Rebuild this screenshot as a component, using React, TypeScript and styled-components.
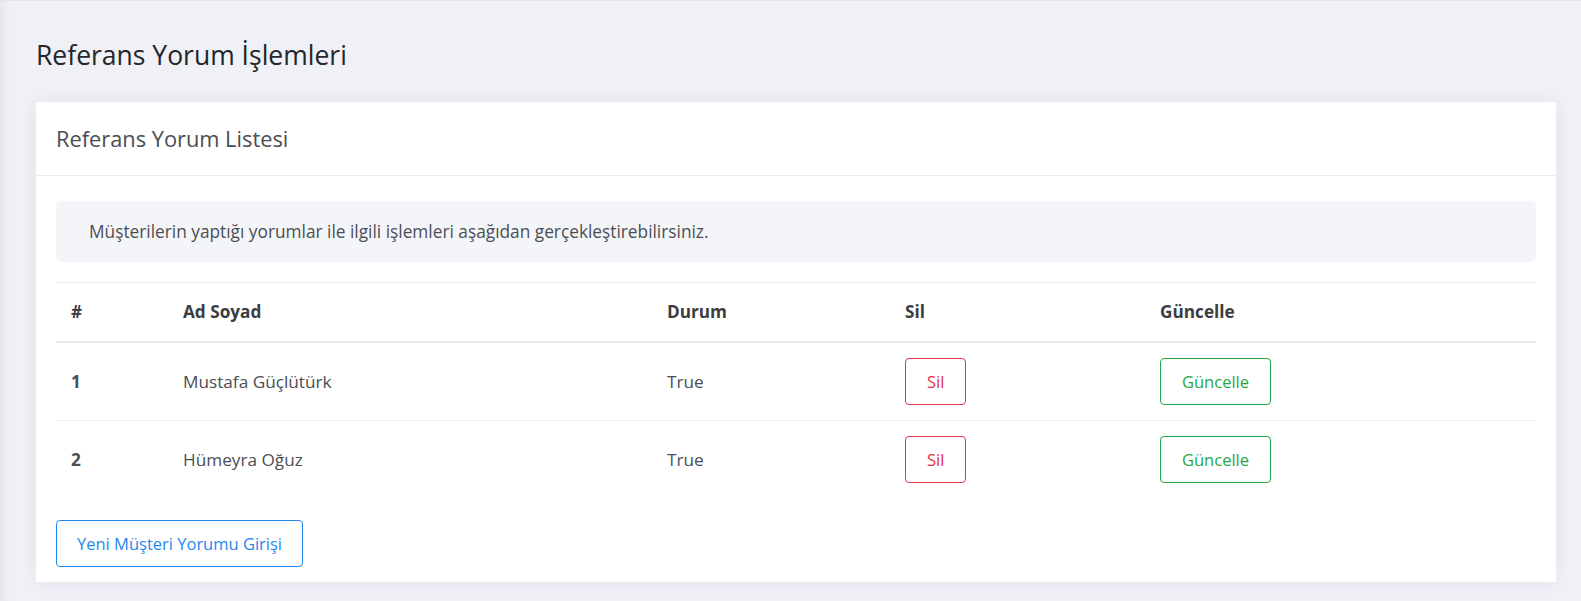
import React from "react";
import styled, { createGlobalStyle } from "styled-components";

const Global = createGlobalStyle`
  html, body { margin: 0; padding: 0; }
  body {
    background: #f0f1f7;
    font-family: "Open Sans", "Noto Sans", "Liberation Sans", sans-serif;
    color: #495057;
  }
  * { box-sizing: border-box; }
`;

const Page = styled.div`
  min-height: 601px;
  border-top: 1px solid #e3e4ea;
  padding: 38px 25px 20px 36px;
  box-shadow: inset 12px 0 12px -10px rgba(0, 0, 0, 0.07);
`;

const Title = styled.h1`
  margin: 0 0 31px;
  font-size: 26.5px;
  line-height: 32px;
  font-weight: 400;
  color: #23262b;
`;

const Card = styled.section`
  background: #fff;
  box-shadow: 0 0 18px rgba(40, 45, 80, 0.07);
`;

const CardHeader = styled.div`
  height: 74px;
  display: flex;
  align-items: center;
  padding: 0 20px;
  border-bottom: 1px solid #e9ebef;
  font-size: 21.8px;
  color: #4a4d52;
`;

const CardBody = styled.div`
  padding: 25px 20px 15px;
`;

const Alert = styled.div`
  height: 61px;
  display: flex;
  align-items: center;
  padding: 0 33px;
  background: #f4f5f9;
  border-radius: 5px;
  font-size: 17.3px;
  color: #4b4e54;
  margin-bottom: 20px;
`;

const Table = styled.table`
  width: 100%;
  border-collapse: collapse;
  table-layout: fixed;
  font-size: 17.2px;
`;

const Th = styled.th`
  text-align: left;
  padding: 17px 15px;
  line-height: 24px;
  font-weight: 700;
  color: #3c3d40;
  border-top: 1px solid #e9ebef;
  border-bottom: 2px solid #e9ebef;
`;

const Td = styled.td<{ $bold?: boolean }>`
  padding: 15px;
  line-height: 24px;
  height: 77px;
  vertical-align: middle;
  color: #4b4e54;
  font-weight: ${(p) => (p.$bold ? 700 : 400)};
  border-top: 1px solid #eceef2;
`;

const Row = styled.tr`
  &:first-child td { border-top: none; }
`;

const OutlineButton = styled.button<{ $color: string; $px: number }>`
  height: 47px;
  padding: 0 ${(p) => p.$px}px;
  background: transparent;
  border: 1px solid ${(p) => p.$color};
  color: ${(p) => p.$color};
  border-radius: 4px;
  font-family: inherit;
  font-size: 16.5px;
  cursor: pointer;
`;

const Footer = styled.div`
  margin-top: 22px;
`;

const rows = [
  { id: 1, name: "Mustafa Güçlütürk", status: "True" },
  { id: 2, name: "Hümeyra Oğuz", status: "True" },
];

export default function App() {
  return (
    <>
      <Global />
      <Page>
        <Title>Referans Yorum İşlemleri</Title>
        <Card>
          <CardHeader>Referans Yorum Listesi</CardHeader>
          <CardBody>
            <Alert>
              Müşterilerin yaptığı yorumlar ile ilgili işlemleri aşağıdan gerçekleştirebilirsiniz.
            </Alert>
            <Table>
              <colgroup>
                <col style={{ width: 112 }} />
                <col style={{ width: 484 }} />
                <col style={{ width: 238 }} />
                <col style={{ width: 255 }} />
                <col />
              </colgroup>
              <thead>
                <tr>
                  <Th>#</Th>
                  <Th>Ad Soyad</Th>
                  <Th>Durum</Th>
                  <Th>Sil</Th>
                  <Th>Güncelle</Th>
                </tr>
              </thead>
              <tbody>
                {rows.map((r) => (
                  <Row key={r.id}>
                    <Td $bold>{r.id}</Td>
                    <Td>{r.name}</Td>
                    <Td>{r.status}</Td>
                    <Td>
                      <OutlineButton $color="#dc3545" $px={21}>Sil</OutlineButton>
                    </Td>
                    <Td>
                      <OutlineButton $color="#28a745" $px={21}>Güncelle</OutlineButton>
                    </Td>
                  </Row>
                ))}
              </tbody>
            </Table>
            <Footer>
              <OutlineButton $color="#1e88f0" $px={20}>Yeni Müşteri Yorumu Girişi</OutlineButton>
            </Footer>
          </CardBody>
        </Card>
      </Page>
    </>
  );
}
